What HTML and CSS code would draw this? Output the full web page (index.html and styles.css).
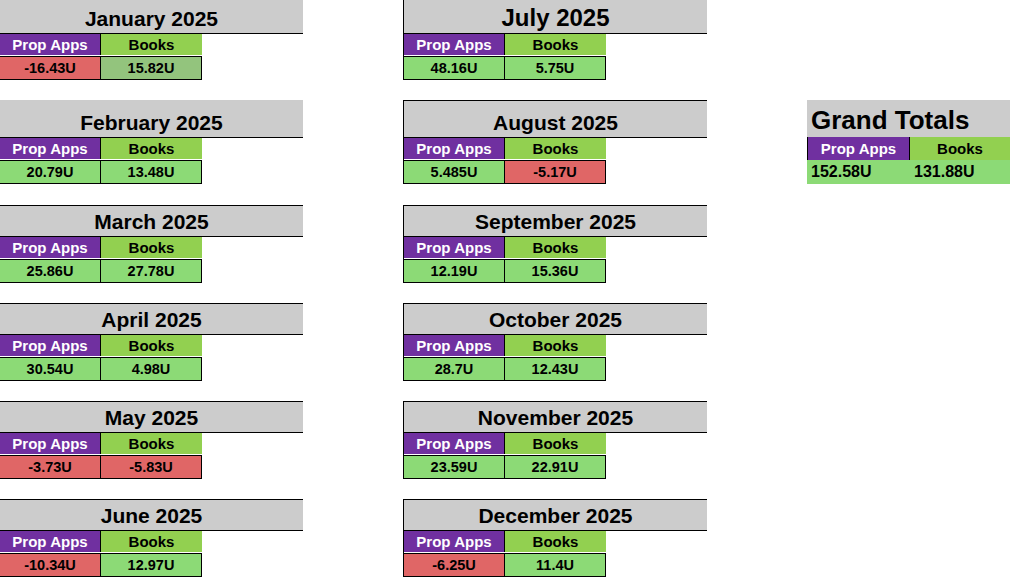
FILE: index.html
```html
<!DOCTYPE html>
<html>
<head>
<meta charset="utf-8">
<link rel="stylesheet" href="styles.css">
</head>
<body>
<div class="page">
  <div class="col col-left">
    <div class="block">
      <div class="hdr h34">January 2025</div>
      <div class="row labels"><div class="cell c1 purple">Prop Apps</div><div class="cell c2 lime">Books</div></div>
      <div class="row vals"><div class="cell c1 red">-16.43U</div><div class="cell c2 sage">15.82U</div></div>
    </div>
    <div class="block">
      <div class="hdr h38">February 2025</div>
      <div class="row labels"><div class="cell c1 purple">Prop Apps</div><div class="cell c2 lime">Books</div></div>
      <div class="row vals"><div class="cell c1 green">20.79U</div><div class="cell c2 green">13.48U</div></div>
    </div>
    <div class="block gap21">
      <div class="hdr h32 topb">March 2025</div>
      <div class="row labels"><div class="cell c1 purple">Prop Apps</div><div class="cell c2 lime">Books</div></div>
      <div class="row vals"><div class="cell c1 green">25.86U</div><div class="cell c2 green">27.78U</div></div>
    </div>
    <div class="block">
      <div class="hdr h32 topb">April 2025</div>
      <div class="row labels"><div class="cell c1 purple">Prop Apps</div><div class="cell c2 lime">Books</div></div>
      <div class="row vals"><div class="cell c1 green">30.54U</div><div class="cell c2 green">4.98U</div></div>
    </div>
    <div class="block">
      <div class="hdr h32 topb">May 2025</div>
      <div class="row labels"><div class="cell c1 purple">Prop Apps</div><div class="cell c2 lime">Books</div></div>
      <div class="row vals"><div class="cell c1 red">-3.73U</div><div class="cell c2 red">-5.83U</div></div>
    </div>
    <div class="block">
      <div class="hdr h32 topb">June 2025</div>
      <div class="row labels"><div class="cell c1 purple">Prop Apps</div><div class="cell c2 lime">Books</div></div>
      <div class="row vals"><div class="cell c1 red">-10.34U</div><div class="cell c2 green">12.97U</div></div>
    </div>
  </div>

  <div class="col col-right">
    <div class="block">
      <div class="hdr h34 big">July 2025</div>
      <div class="row labels"><div class="cell c1 purple">Prop Apps</div><div class="cell c2 lime">Books</div></div>
      <div class="row vals"><div class="cell c1 green">48.16U</div><div class="cell c2 green">5.75U</div></div>
    </div>
    <div class="block">
      <div class="hdr h38 topb">August 2025</div>
      <div class="row labels"><div class="cell c1 purple">Prop Apps</div><div class="cell c2 lime">Books</div></div>
      <div class="row vals"><div class="cell c1 green">5.485U</div><div class="cell c2 red">-5.17U</div></div>
    </div>
    <div class="block gap21">
      <div class="hdr h32 topb">September 2025</div>
      <div class="row labels"><div class="cell c1 purple">Prop Apps</div><div class="cell c2 lime">Books</div></div>
      <div class="row vals"><div class="cell c1 green">12.19U</div><div class="cell c2 green">15.36U</div></div>
    </div>
    <div class="block">
      <div class="hdr h32 topb">October 2025</div>
      <div class="row labels"><div class="cell c1 purple">Prop Apps</div><div class="cell c2 lime">Books</div></div>
      <div class="row vals"><div class="cell c1 green">28.7U</div><div class="cell c2 green">12.43U</div></div>
    </div>
    <div class="block">
      <div class="hdr h32 topb">November 2025</div>
      <div class="row labels"><div class="cell c1 purple">Prop Apps</div><div class="cell c2 lime">Books</div></div>
      <div class="row vals"><div class="cell c1 green">23.59U</div><div class="cell c2 green">22.91U</div></div>
    </div>
    <div class="block">
      <div class="hdr h32 topb">December 2025</div>
      <div class="row labels"><div class="cell c1 purple">Prop Apps</div><div class="cell c2 lime">Books</div></div>
      <div class="row vals"><div class="cell c1 red">-6.25U</div><div class="cell c2 green">11.4U</div></div>
    </div>
  </div>

  <div class="col col-grand">
    <div class="grand">
      <div class="ghdr">Grand Totals</div>
      <div class="row glabels"><div class="cell g1 purple">Prop Apps</div><div class="cell g2 lime">Books</div></div>
      <div class="row gvals"><div class="gcell g1">152.58U</div><div class="gcell g2">131.88U</div></div>
    </div>
  </div>
</div>
</body>
</html>
```

FILE: styles.css
```css
html, body {
  margin: 0;
  padding: 0;
  background: #ffffff;
}
body {
  font-family: "Liberation Sans", Arial, sans-serif;
  font-weight: bold;
  color: #000000;
  width: 1010px;
  height: 577px;
  overflow: hidden;
}
.page {
  display: flex;
  align-items: flex-start;
}
.col {
  display: flex;
  flex-direction: column;
}
.col-left {
  width: 303px;
  margin-right: 100px;
}
.col-right {
  width: 304px;
  margin-right: 100px;
}
.col-right .hdr,
.col-right .row {
  border-left: 1px solid #000;
}
.col-grand {
  width: 203px;
  padding-top: 100px;
}
.block {
  margin-bottom: 20px;
  display: flex;
  flex-direction: column;
}
.block.gap21 {
  margin-top: 1px;
}
.hdr {
  box-sizing: border-box;
  background: #cccccc;
  border-bottom: 1px solid #000;
  display: flex;
  align-items: flex-end;
  justify-content: center;
  font-size: 21px;
  line-height: 24px;
  padding-bottom: 2px;
}
.hdr.big {
  font-size: 24px;
  line-height: 27px;
}
.hdr.topb {
  border-top: 1px solid #000;
}
.h34 { height: 34px; }
.h38 { height: 38px; }
.h32 { height: 32px; }

.row {
  display: flex;
}
.cell {
  box-sizing: border-box;
  display: flex;
  align-items: center;
  justify-content: center;
}
.labels {
  height: 22px;
  font-size: 15px;
  line-height: 17px;
  padding-bottom: 1px;
  box-sizing: border-box;
}
.labels .c1 {
  width: 101px;
  border-right: 1px solid #000;
}
.labels .c2 {
  width: 101px;
}
.vals {
  height: 24px;
  font-size: 14.5px;
  border-top: 1px solid #000;
  border-bottom: 1px solid #000;
  box-sizing: border-box;
  width: 202px;
}
.col-right .vals,
.col-right .labels {
  width: 203px;
}
.vals .c1 {
  width: 101px;
  border-right: 1px solid #000;
}
.vals .c2 {
  width: 101px;
  border-right: 1px solid #000;
}
.purple { background: #7030a0; color: #ffffff; }
.lime { background: #92d050; }
.green { background: #8cda76; }
.red { background: #e06666; }
.sage { background: #93c47d; }

.ghdr {
  height: 37px;
  box-sizing: border-box;
  background: #cccccc;
  font-size: 26px;
  line-height: 30px;
  padding: 5px 0 0 4px;
}
.glabels {
  height: 23px;
  font-size: 15px;
}
.glabels .g1 {
  width: 103px;
  border-left: 1px solid #000;
  border-right: 1px solid #000;
}
.glabels .g2 {
  width: 100px;
}
.gvals {
  height: 24px;
  background: #8cda76;
  font-size: 16px;
}
.gcell {
  display: flex;
  align-items: center;
  padding-left: 4px;
  box-sizing: border-box;
}
.gvals .g1 { width: 103px; }
.gvals .g2 { width: 100px; }
```
